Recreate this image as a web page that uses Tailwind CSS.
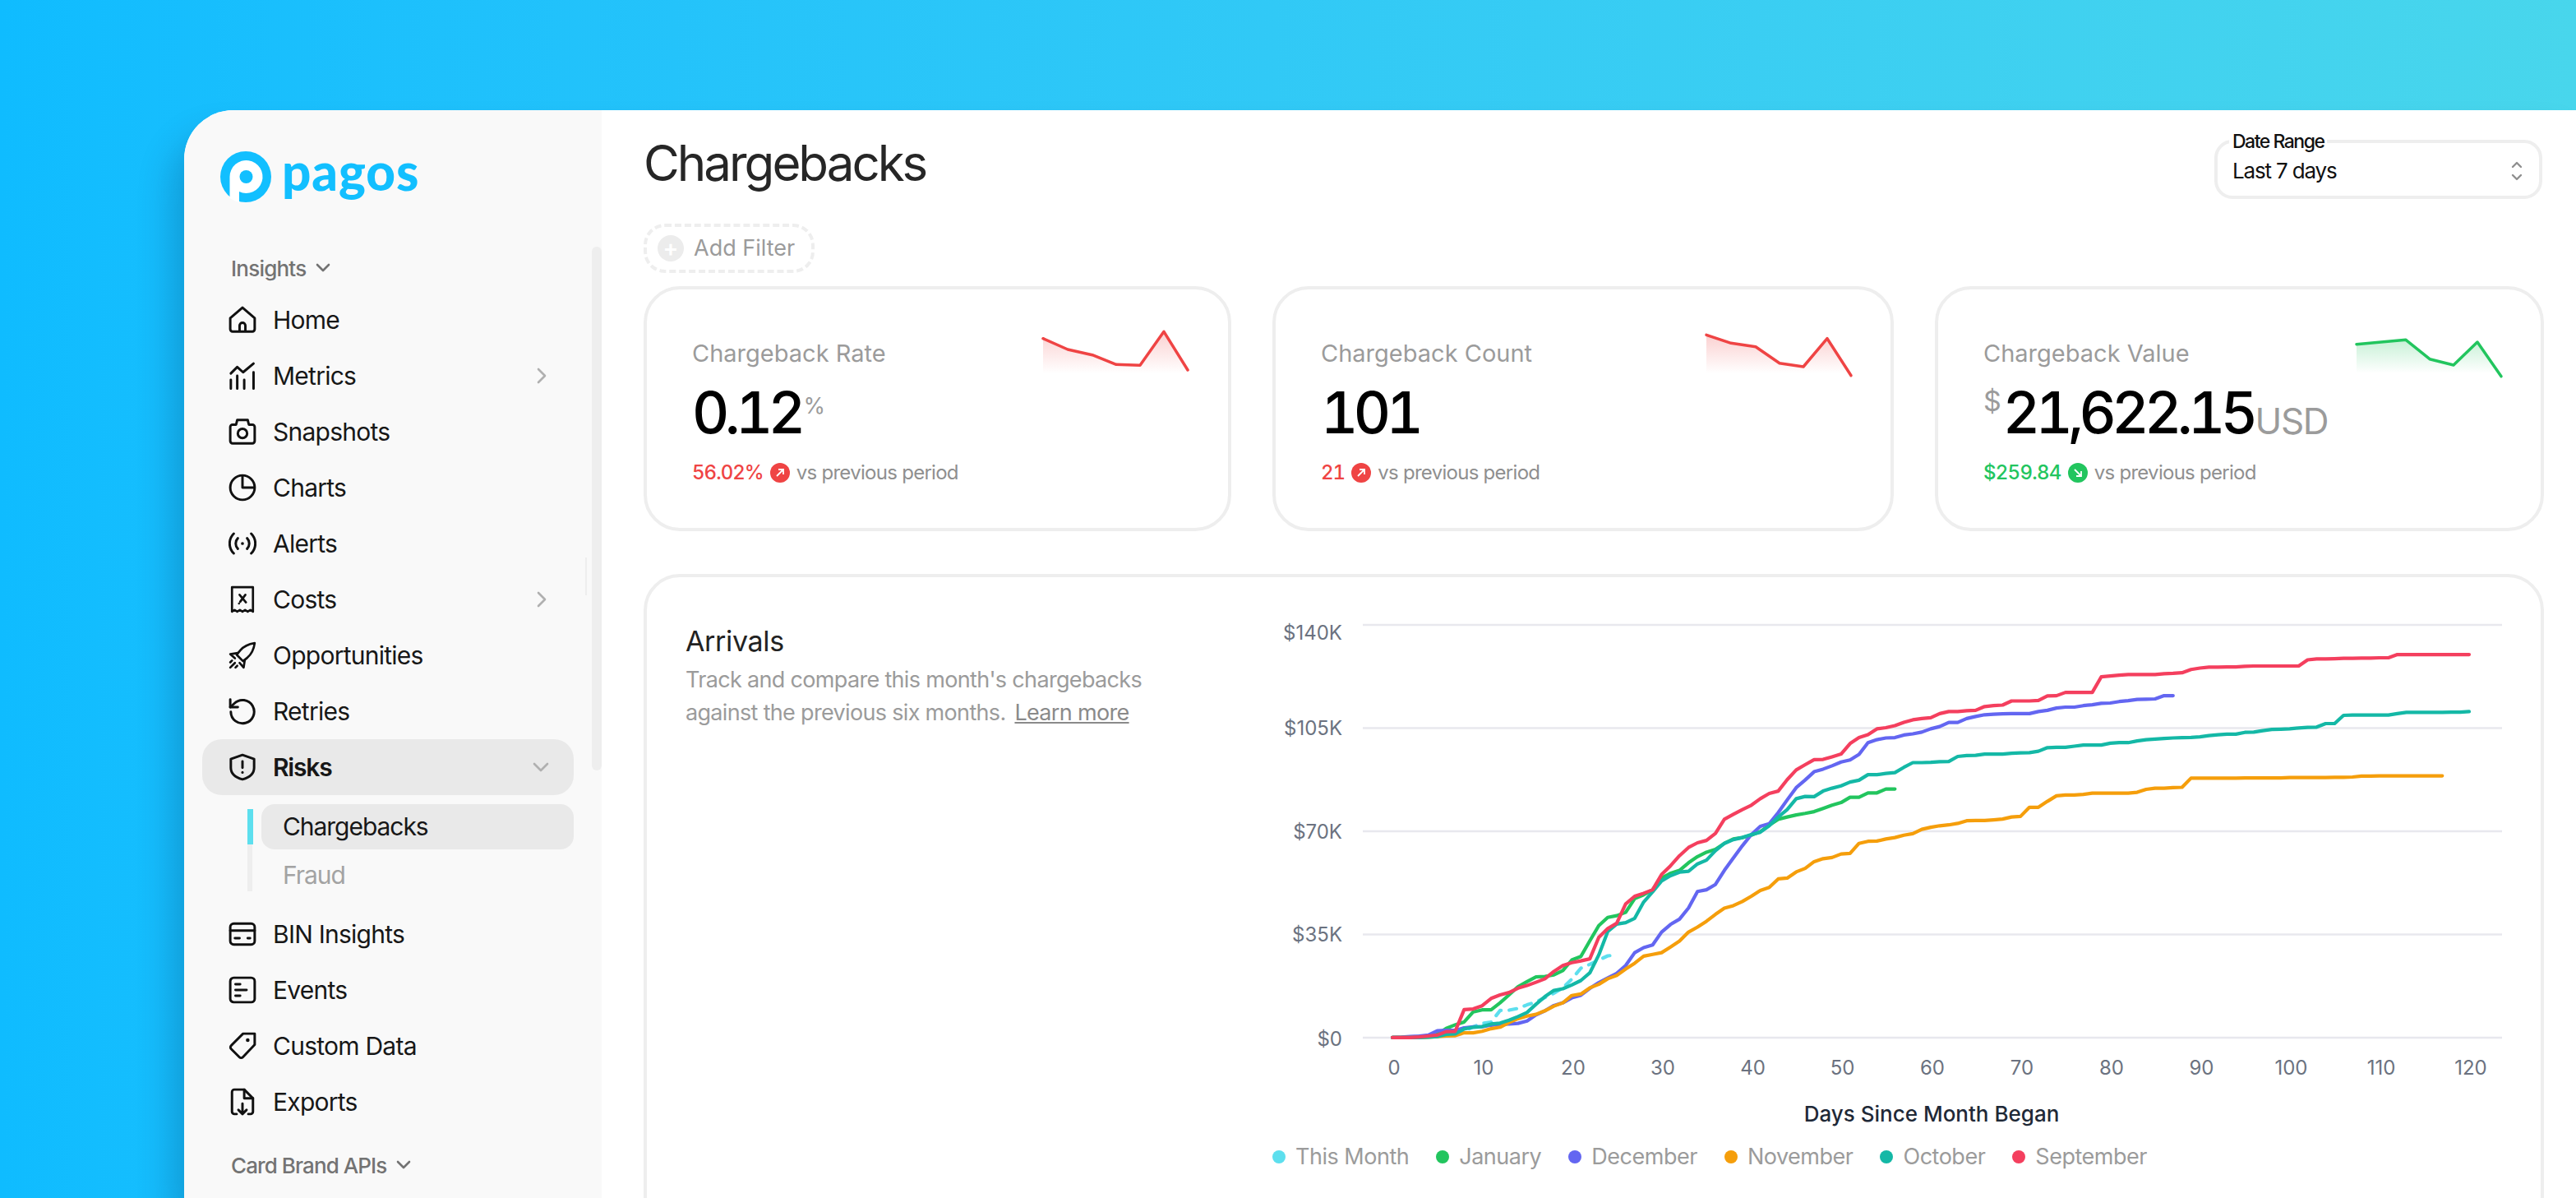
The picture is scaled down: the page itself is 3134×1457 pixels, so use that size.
<!doctype html>
<html lang="en">
  <head>
    <meta charset="UTF-8" />
    <title>Pagos - Chargebacks</title>
    <script src="https://cdn.jsdelivr.net/npm/@tailwindcss/browser@4"></script>
  </head>
  <body class="w-[3134px] h-[1457px] overflow-hidden bg-linear-to-r from-[#0fbcff] to-[#48d6ec] pt-[134px] pl-[224px] [font-family:Inter,sans-serif] text-[#171717]">
    <div class="flex h-[1323px] bg-white rounded-tl-[60px] shadow-[-16px_30px_40px_rgba(0,40,80,0.22)]">
      <!-- sidebar -->
      <aside class="relative w-[508px] shrink-0 bg-[#f9f9f9] rounded-tl-[60px] pt-[50px]">
        <div class="absolute right-0 top-[166px] w-[12px] h-[637px] rounded-t-[8px] rounded-b-[8px] bg-[#eeeeee]"></div>
        <div class="absolute right-[18px] top-[544px] w-[2px] h-[46px] bg-[#eeeeee]"></div>
        <div class="flex items-center pl-[44px] gap-[13px] h-[62px]">
          <svg class="w-[62px] h-[62px]" viewBox="0 0 62 62">
            <circle cx="31" cy="31" r="31" fill="#12bfff" />
            <path d="M11.5 31a20 20 0 1 1 11.5 18.1V62a31 31 0 0 1-11.5-5z" fill="#fff" />
            <circle cx="31.5" cy="31" r="8" fill="#12bfff" />
          </svg>
          <span class="[font-family:Lato,sans-serif] font-black text-[62px] leading-[62px] tracking-[0.015em] text-[#12bfff] -mt-[14px]">pagos</span>
        </div>
        <div class="flex items-center gap-[12px] h-[40px] mt-[60px] pl-[57px] text-[26px] font-medium tracking-[-0.03em] text-[#737373]">
          Insights
          <svg class="w-[18px] h-[12px]" viewBox="0 0 18 12" fill="none" stroke="#737373" stroke-width="2.6" stroke-linecap="round" stroke-linejoin="round"><path d="M2 2l7 7 7-7" /></svg>
        </div>
        <nav class="mt-[9px] ml-[22px] mr-[34px] text-[30px] tracking-[-0.025em]">
          <a class="flex items-center h-[68px] px-[32px] gap-[20px]">
            <svg class="w-[34px] h-[34px]" viewBox="0 0 24 24" fill="none" stroke="#111" stroke-width="2.100" stroke-linejoin="round"><path d="M1.500 10.500L12 1.500l10.500 9V20a2 2 0 0 1-2 2h-17a2 2 0 0 1-2-2z" /><path d="M9.500 22v-5a2.500 2.500 0 0 1 5 0v5" /></svg>
            Home
          </a>
          <a class="flex items-center h-[68px] px-[32px] gap-[20px]">
            <svg class="w-[34px] h-[34px]" viewBox="0 0 24 24" fill="none" stroke="#111" stroke-width="2.100" stroke-linecap="round" stroke-linejoin="round"><path d="M2 10l5.500-5.500 5 4.500 9-7.500" /><path d="M2 15.500V23M7.500 12v11M13.500 15.500V23M21.500 9v14" /></svg>
            Metrics
            <svg class="ml-auto w-[14px] h-[22px]" viewBox="0 0 14 22" fill="none" stroke="#b0b0b0" stroke-width="2.6" stroke-linecap="round" stroke-linejoin="round"><path d="M3 3l8 8-8 8" /></svg>
          </a>
          <a class="flex items-center h-[68px] px-[32px] gap-[20px]">
            <svg class="w-[34px] h-[34px]" viewBox="0 0 24 24" fill="none" stroke="#111" stroke-width="2.100" stroke-linejoin="round"><path d="M1.500 8a2 2 0 0 1 2-2h3l1-4h9l1 4h3a2 2 0 0 1 2 2v12a2 2 0 0 1-2 2h-17a2 2 0 0 1-2-2z" /><circle cx="12" cy="13.500" r="4" /></svg>
            Snapshots
          </a>
          <a class="flex items-center h-[68px] px-[32px] gap-[20px]">
            <svg class="w-[34px] h-[34px]" viewBox="0 0 24 24" fill="none" stroke="#111" stroke-width="2.100" stroke-linejoin="round"><circle cx="12" cy="12" r="10.500" /><path d="M12 1.500V12h10.500" /></svg>
            Charts
          </a>
          <a class="flex items-center h-[68px] px-[32px] gap-[20px]">
            <svg class="w-[34px] h-[34px]" viewBox="0 0 24 24" fill="none" stroke="#111" stroke-width="2.100" stroke-linecap="round"><path d="M8 7.500a6.500 6.500 0 0 0 0 9M16 7.500a6.500 6.500 0 0 1 0 9M4.500 3.500a12 12 0 0 0 0 17M19.500 3.500a12 12 0 0 1 0 17" /><circle cx="12" cy="12" r="1.300" fill="#111" stroke="none" /></svg>
            Alerts
          </a>
          <a class="flex items-center h-[68px] px-[32px] gap-[20px]">
            <svg class="w-[34px] h-[34px]" viewBox="0 0 24 24" fill="none" stroke="#111" stroke-width="1.900" stroke-linejoin="round"><path d="M3 1.500h18v21l-2.250-1.500-2.250 1.500-2.250-1.500-2.250 1.500-2.250-1.500-2.250 1.500-2.250-1.500L3 22.500z" /><path d="M9.500 8l5.500 6.500M14.500 8L10 14" stroke-linecap="round" /><circle cx="9" cy="15.500" r=".9" fill="#111" stroke="none" /></svg>
            Costs
            <svg class="ml-auto w-[14px] h-[22px]" viewBox="0 0 14 22" fill="none" stroke="#b0b0b0" stroke-width="2.6" stroke-linecap="round" stroke-linejoin="round"><path d="M3 3l8 8-8 8" /></svg>
          </a>
          <a class="flex items-center h-[68px] px-[32px] gap-[20px]">
            <svg class="w-[34px] h-[34px]" viewBox="0 0 24 24" fill="none" stroke="#111" stroke-width="1.900" stroke-linejoin="round" stroke-linecap="round"><path d="M22.500 1.500c-5 .7-9.500 2.800-12.500 6.300l-3 3.700 5.500 5.500 3.700-3c3.500-3 5.600-7.500 6.300-12.500z" /><path d="M8 10l-6.500 1 4 3.500M14 16l-1 6.500-3.500-4" /><path d="M1.500 22.500l4-4M1.500 18l1.500-1.500M6 22.500l1.500-1.500" /></svg>
            Opportunities
          </a>
          <a class="flex items-center h-[68px] px-[32px] gap-[20px]">
            <svg class="w-[34px] h-[34px]" viewBox="0 0 24 24" fill="none" stroke="#111" stroke-width="2.100" stroke-linejoin="round" stroke-linecap="round"><path d="M2 12.500A10 10 0 1 0 5 5.300L1.500 8.500" /><path d="M1.500 2v6.500H8" /></svg>
            Retries
          </a>
          <a class="flex items-center h-[68px] px-[32px] gap-[20px] rounded-[24px] bg-[#e9e9e9] font-semibold tracking-[-0.04em]">
            <svg class="w-[34px] h-[34px]" viewBox="0 0 24 24" fill="none" stroke="#111" stroke-width="2.100" stroke-linejoin="round" stroke-linecap="round"><path d="M12 1.500l10 3.500v7.500c0 5.500-4.500 8.500-10 10-5.500-1.500-10-4.500-10-10V5z" /><path d="M12 7v5.500" /><circle cx="12" cy="16.500" r="1.100" fill="#111" stroke="none" /></svg>
            Risks
            <svg class="ml-auto -mr-[3px] w-[22px] h-[14px]" viewBox="0 0 22 14" fill="none" stroke="#b0b0b0" stroke-width="2.600" stroke-linecap="round" stroke-linejoin="round"><path d="M3 3l8 8 8-8" /></svg>
          </a>
          <div class="flex mt-[11px] mb-[8px] pl-[55px] gap-[11px]">
            <div class="w-[6px] mt-[6px] mb-[10px] bg-[#eeeeee]"><div class="w-[7px] h-[43px] bg-[#5ddfee]"></div></div>
            <div class="flex-1 tracking-[-0.035em]">
              <a class="flex items-center h-[55px] pl-[26px] rounded-[16px] bg-[#e9e9e9]">Chargebacks</a>
              <a class="flex items-center h-[60px] mt-[1px] pl-[26px] text-[#a3a3a3]">Fraud</a>
            </div>
          </div>
          <a class="flex items-center h-[68px] px-[32px] gap-[20px]">
            <svg class="w-[34px] h-[34px]" viewBox="0 0 24 24" fill="none" stroke="#111" stroke-width="2.100" stroke-linejoin="round" stroke-linecap="round"><rect x="1.500" y="3" width="21" height="18" rx="3" /><path d="M1.500 9h21M5.500 15.500h4M16.500 15.500h2" /></svg>
            BIN Insights
          </a>
          <a class="flex items-center h-[68px] px-[32px] gap-[20px]">
            <svg class="w-[34px] h-[34px]" viewBox="0 0 24 24" fill="none" stroke="#111" stroke-width="2.100" stroke-linejoin="round" stroke-linecap="round"><rect x="1.500" y="1.500" width="21" height="21" rx="3" /><path d="M6 7h4M6 12h9.500M6 17h4" /></svg>
            Events
          </a>
          <a class="flex items-center h-[68px] px-[32px] gap-[20px]">
            <svg class="w-[34px] h-[34px]" viewBox="0 0 24 24" fill="none" stroke="#111" stroke-width="2.100" stroke-linejoin="round"><path d="M22.500 1.500v9.500L12.300 21.700a2 2 0 0 1-2.900 0L2.300 14.600a2 2 0 0 1 0-2.900L12.500 1.500z" /><circle cx="16.500" cy="7" r="1.600" fill="#111" stroke="none" /></svg>
            Custom Data
          </a>
          <a class="flex items-center h-[68px] px-[32px] gap-[20px]">
            <svg class="w-[34px] h-[34px]" viewBox="0 0 24 24" fill="none" stroke="#111" stroke-width="2.100" stroke-linejoin="round" stroke-linecap="round"><path d="M7 22.500H5a2 2 0 0 1-2-2V3.500a2 2 0 0 1 2-2h8.500l7.500 7.500v11.500a2 2 0 0 1-2 2h-2" /><path d="M13.500 1.500V9H21" /><path d="M12 13.500v9M8.500 19l3.500 3.500 3.500-3.500" /></svg>
            Exports
          </a>
        </nav>
        <div class="flex items-center gap-[12px] h-[40px] mt-[23px] pl-[57px] text-[26px] font-medium tracking-[-0.035em] text-[#737373]">
          Card Brand APIs
          <svg class="w-[18px] h-[12px]" viewBox="0 0 18 12" fill="none" stroke="#737373" stroke-width="2.600" stroke-linecap="round" stroke-linejoin="round"><path d="M2 2l7 7 7-7" /></svg>
        </div>
      </aside>

      <!-- main -->
      <main class="flex-1 pl-[51px] pr-[39px] pt-[36px]">
        <header class="flex justify-between items-start h-[72px]">
          <h1 class="-mt-[8px] text-[60px] leading-[72px] font-normal tracking-[-0.05em] text-[#262626]">Chargebacks</h1>
          <div class="relative mr-[2px] w-[399px] h-[72px] rounded-[22px] border-[4px] border-[#eeeeee] flex items-center justify-between pl-[18px] pr-[20px] pt-[3px] text-[26px] text-[#111] tracking-[-0.045em]">
            <span class="absolute left-[14px] -top-[16px] bg-white px-[4px] text-[23px] leading-[28px] font-medium tracking-[-0.065em]">Date Range</span>
            Last 7 days
            <svg class="w-[14px] h-[26px]" viewBox="0 0 14 26" fill="none" stroke="#8f8f8f" stroke-width="2.400" stroke-linecap="round" stroke-linejoin="round"><path d="M2 8l5-5 5 5M2 18l5 5 5-5" /></svg>
          </div>
        </header>
        <button class="mt-[30px] flex items-center h-[60px] w-[208px] rounded-[26px] border-[4px] border-dashed border-[#eeeeee] pl-[13px] gap-[12px] text-[27px] text-[#9b9b9b]">
          <span class="flex items-center justify-center w-[32px] h-[32px] rounded-full bg-[#ececec] text-white text-[28px] leading-[32px] font-semibold">+</span>
          Add Filter
        </button>
        <section class="flex gap-[50px] mt-[16px]">
          <div class="w-[715px] h-[298px] rounded-[44px] border-[4px] border-[#eeeeee] flex justify-between pl-[55px] pr-[49px] pt-[48px]">
            <div>
              <div class="mt-[12px] text-[29px] leading-[36px] text-[#9b9b9b]">Chargeback Rate</div>
              <div class="flex items-start mt-[18px] h-[72px] text-[70px] leading-[72px] font-medium tabular-nums tracking-[-0.08em] text-black">0.12<span class="mt-[12px] ml-[3px] text-[27px] leading-[32px] font-normal tracking-[-0.04em] text-[#9b9b9b]">%</span></div>
              <div class="flex items-center mt-[23px] gap-[8px] text-[24px] leading-[28px] tracking-[-0.03em]">
                <span class="font-medium text-[#ef4444] tabular-nums tracking-[-0.04em]">56.02%</span>
                <svg class="w-[24px] h-[24px]" viewBox="0 0 24 24"><circle cx="12" cy="12" r="12" fill="#ef4444" /><path d="M8 16l8-8M10 8h6v6" fill="none" stroke="#fff" stroke-width="1.800" /></svg>
                <span class="text-[#8f8f8f]">vs previous period</span>
              </div>
            </div>
            <svg class="w-[176px] h-[60px] overflow-visible" viewBox="0 0 176 60">
              <defs>
                <linearGradient id="spark-red" x1="0" y1="0" x2="0" y2="1"><stop offset="0" stop-color="#ef4444" stop-opacity=".25" /><stop offset="1" stop-color="#ef4444" stop-opacity="0" /></linearGradient>
                <linearGradient id="spark-green" x1="0" y1="0" x2="0" y2="1"><stop offset="0" stop-color="#22c55e" stop-opacity=".25" /><stop offset="1" stop-color="#22c55e" stop-opacity="0" /></linearGradient>
              </defs>
              <path d="M0 11.700L30 25 60 31.700 89 43.300 118 44.300 147 3.300 176 50V54H0z" fill="url(#spark-red)" />
              <polyline points="0,11.700 30,25 60,31.700 89,43.300 118,44.300 147,3.300 176,50" fill="none" stroke="#ef4444" stroke-width="3.500" stroke-linejoin="round" stroke-linecap="round" />
            </svg>
          </div>
          <div class="w-[756px] h-[298px] rounded-[44px] border-[4px] border-[#eeeeee] flex justify-between pl-[55px] pr-[48px] pt-[48px]">
            <div>
              <div class="mt-[12px] text-[29px] leading-[36px] text-[#9b9b9b]">Chargeback Count</div>
              <div class="flex items-start mt-[18px] h-[72px] text-[70px] leading-[72px] font-medium tabular-nums tracking-[-0.08em] text-black">101</div>
              <div class="flex items-center mt-[23px] gap-[8px] text-[24px] leading-[28px] tracking-[-0.03em]">
                <span class="font-medium text-[#ef4444] tabular-nums tracking-[-0.04em]">21</span>
                <svg class="w-[24px] h-[24px]" viewBox="0 0 24 24"><circle cx="12" cy="12" r="12" fill="#ef4444" /><path d="M8 16l8-8M10 8h6v6" fill="none" stroke="#fff" stroke-width="1.800" /></svg>
                <span class="text-[#8f8f8f]">vs previous period</span>
              </div>
            </div>
            <svg class="w-[176px] h-[60px] overflow-visible" viewBox="0 0 176 60">
              <path d="M0 7.300L30 17.300 60 21.700 89 41.700 118 46 147 11.700 176 54H0z" fill="url(#spark-red)" />
              <polyline points="0,7.300 30,17.300 60,21.700 89,41.700 118,46 147,11.700 176,56.700" fill="none" stroke="#ef4444" stroke-width="3.500" stroke-linejoin="round" stroke-linecap="round" />
            </svg>
          </div>
          <div class="w-[741px] h-[298px] rounded-[44px] border-[4px] border-[#eeeeee] flex justify-between pl-[55px] pr-[48px] pt-[48px]">
            <div>
              <div class="mt-[12px] text-[29px] leading-[36px] text-[#9b9b9b]">Chargeback Value</div>
              <div class="flex items-start mt-[18px] h-[72px] text-[70px] leading-[72px] font-medium tabular-nums tracking-[-0.08em] text-black whitespace-nowrap"><span class="mt-[0px] mr-[2px] text-[34px] leading-[44px] font-normal tracking-normal text-[#9b9b9b]">$</span>21,622.15<span class="mt-[17px] ml-[2px] text-[44px] leading-[58px] font-normal tracking-[-0.03em] text-[#9b9b9b]">USD</span></div>
              <div class="flex items-center mt-[23px] gap-[8px] text-[24px] leading-[28px] tracking-[-0.03em]">
                <span class="font-medium text-[#22c55e] tabular-nums tracking-[-0.03em]">$259.84</span>
                <svg class="w-[24px] h-[24px]" viewBox="0 0 24 24"><circle cx="12" cy="12" r="12" fill="#22c55e" /><path d="M8 8l8 8M16 10v6h-6" fill="none" stroke="#fff" stroke-width="1.800" /></svg>
                <span class="text-[#8f8f8f]">vs previous period</span>
              </div>
            </div>
            <svg class="w-[176px] h-[60px] overflow-visible" viewBox="0 0 176 60">
              <path d="M0 18.700L30 16 60 13.300 89 36.700 118 44 147 16 176 54H0z" fill="url(#spark-green)" />
              <polyline points="0,18.700 30,16 60,13.300 89,36.700 118,44 147,16 176,57.700" fill="none" stroke="#22c55e" stroke-width="3.500" stroke-linejoin="round" stroke-linecap="round" />
            </svg>
          </div>
        </section>
        <section class="flex mt-[52px] h-[800px] w-[2312px] rounded-[44px] border-[4px] border-[#eeeeee] pl-[47px] pt-[38px]">
          <div class="w-[706px] shrink-0">
            <h2 class="mt-[19px] text-[34px] leading-[42px] tracking-[-0.01em] text-[#222]">Arrivals</h2>
            <p class="mt-[6px] text-[27px] leading-[40px] tracking-[-0.025em] text-[#9b9b9b]">Track and compare this month's chargebacks<br />against the previous six months. <span class="ml-[4px] underline text-[#8a8a8a]">Learn more</span></p>
          </div>
          <div class="w-[1520px] shrink-0">
            <svg class="w-[1520px] h-[640px]" viewBox="0 0 1520 640">
              <g stroke="#e8e8ee" stroke-width="2.500">
                <line x1="118" x2="1504" y1="20" y2="20" />
                <line x1="118" x2="1504" y1="145.500" y2="145.500" />
                <line x1="118" x2="1504" y1="271" y2="271" />
                <line x1="118" x2="1504" y1="396.500" y2="396.500" />
                <line x1="118" x2="1504" y1="522" y2="522" />
              </g>
              <g class="fill-[#6b7280] text-[24px]" text-anchor="end" dominant-baseline="central">
                <text x="93" y="29">$140K</text>
                <text x="93" y="145">$105K</text>
                <text x="93" y="271">$70K</text>
                <text x="93" y="396">$35K</text>
                <text x="93" y="523">$0</text>
              </g>
              <g class="fill-[#6b7280] text-[24px]" text-anchor="middle" dominant-baseline="central">
                <text x="156" y="558">0</text>
                <text x="265" y="558">10</text>
                <text x="374" y="558">20</text>
                <text x="483" y="558">30</text>
                <text x="592.500" y="558">40</text>
                <text x="701.500" y="558">50</text>
                <text x="811" y="558">60</text>
                <text x="920" y="558">70</text>
                <text x="1029" y="558">80</text>
                <text x="1138.500" y="558">90</text>
                <text x="1247.500" y="558">100</text>
                <text x="1357" y="558">110</text>
                <text x="1466" y="558">120</text>
              </g>
              <text class="fill-[#1f2937] text-[26px] font-medium" x="810" y="614" text-anchor="middle" dominant-baseline="central">Days Since Month Began</text>
              <g id="series" fill="none" stroke-width="4.200" stroke-linejoin="round" stroke-linecap="round"></g>
            </svg>
            <div class="flex items-center gap-[33px] mt-[11px] pl-[8px] text-[27px] leading-[32px] tracking-[-0.018em] text-[#9b9b9b]">
              <span class="flex items-center gap-[12px]"><i class="w-[16px] h-[16px] rounded-full bg-[#5ddfee]"></i>This Month</span>
              <span class="flex items-center gap-[12px]"><i class="w-[16px] h-[16px] rounded-full bg-[#22c55e]"></i>January</span>
              <span class="flex items-center gap-[12px]"><i class="w-[16px] h-[16px] rounded-full bg-[#6366f1]"></i>December</span>
              <span class="flex items-center gap-[12px]"><i class="w-[16px] h-[16px] rounded-full bg-[#f59e0b]"></i>November</span>
              <span class="flex items-center gap-[12px]"><i class="w-[16px] h-[16px] rounded-full bg-[#14b8a6]"></i>October</span>
              <span class="flex items-center gap-[12px]"><i class="w-[16px] h-[16px] rounded-full bg-[#f43f5e]"></i>September</span>
            </div>
          </div>
        </section>
      </main>
    </div>
    <script>
      // y positions per day, measured on a 2.8x scale
      const series = [
        { color: "#5ddfee", dash: "9 10", ys: [1461,1461,1460,1459,1458,1456,1452,1448,1440,1425,1413,1409,1369,1368,1362,1350,1340,1325,1310,1292,1262,1225,1212,1197,1183,1180] },
        { color: "#22c55e", ys: [1461,1461,1461,1458,1456,1450,1430,1418,1408,1374,1367,1367,1343,1316,1288,1271,1255,1253,1248,1233,1197,1185,1132,1080,1052,1046,1035,988,975,958,918,902,892,866,845,830,820,800,785,780,772,760,738,718,710,703,698,692,681,670,661,643,643,628,628,615,615] },
        { color: "#6366f1", ys: [1461,1460,1458,1456,1453,1438,1437,1437,1428,1425,1424,1419,1416,1415,1413,1405,1384,1370,1352,1343,1326,1317,1294,1274,1258,1243,1216,1172,1155,1146,1102,1076,1058,1020,964,958,940,892,850,808,770,742,733,695,652,610,584,556,547,536,523,516,497,457,447,441,440,431,427,421,410,402,388,388,375,368,362,360,359,358,358,358,351,347,339,336,336,331,328,323,322,317,314,310,309,308,297,297] },
        { color: "#f59e0b", ys: [1461,1461,1461,1461,1460,1458,1456,1455,1445,1445,1440,1431,1426,1410,1397,1388,1382,1370,1354,1343,1318,1313,1292,1280,1261,1250,1228,1208,1184,1178,1172,1153,1133,1102,1085,1065,1042,1021,1012,998,980,960,950,921,918,897,885,862,852,848,836,834,800,793,792,785,780,772,767,752,745,740,737,732,723,722,722,720,717,710,708,677,677,657,638,635,635,633,629,629,629,629,629,626,616,612,612,610,609,578,578,578,578,578,578,577,577,577,577,577,576,576,576,576,576,575,575,574,571,571,570,570,570,570,570,570,570,570] },
        { color: "#14b8a6", ys: [1461,1461,1461,1461,1460,1458,1450,1449,1432,1426,1424,1415,1412,1402,1390,1376,1348,1322,1301,1295,1282,1267,1241,1180,1100,1075,1070,1055,1000,965,928,910,898,895,870,857,825,800,787,780,770,762,740,710,685,648,640,641,622,612,604,591,585,566,566,562,559,541,525,525,524,522,521,504,501,500,496,496,496,493,492,491,486,474,473,473,469,465,465,465,459,457,457,451,447,445,443,441,440,439,437,433,430,428,428,422,421,416,412,411,410,407,405,404,392,392,364,363,363,363,363,363,358,354,354,354,354,354,353,353,351] },
        { color: "#f43f5e", ys: [1461,1461,1461,1459,1456,1453,1441,1440,1366,1364,1353,1328,1316,1308,1293,1284,1273,1261,1236,1216,1206,1200,1193,1120,1090,1072,1006,980,970,958,906,876,842,814,798,790,766,718,701,685,670,648,630,622,583,550,532,515,514,505,496,460,440,430,410,406,399,388,379,375,372,358,351,351,348,347,334,331,329,315,315,315,313,298,297,286,286,286,286,233,230,227,225,225,225,225,222,221,219,208,203,200,200,199,199,197,196,196,196,196,196,196,175,172,172,171,170,170,169,169,168,168,157,157,157,157,157,157,157,157,157] }
      ];

      const group = document.getElementById("series");
      series.forEach(s => {
        const line = document.createElementNS("http://www.w3.org/2000/svg", "polyline");
        line.setAttribute("points", s.ys.map((y, day) => (154 + day * 10.917).toFixed(1) + "," + (y / 2.8).toFixed(1)).join(" "));
        line.setAttribute("stroke", s.color);
        if (s.dash) line.setAttribute("stroke-dasharray", s.dash);
        group.appendChild(line);
      });
    </script>
  </body>
</html>
